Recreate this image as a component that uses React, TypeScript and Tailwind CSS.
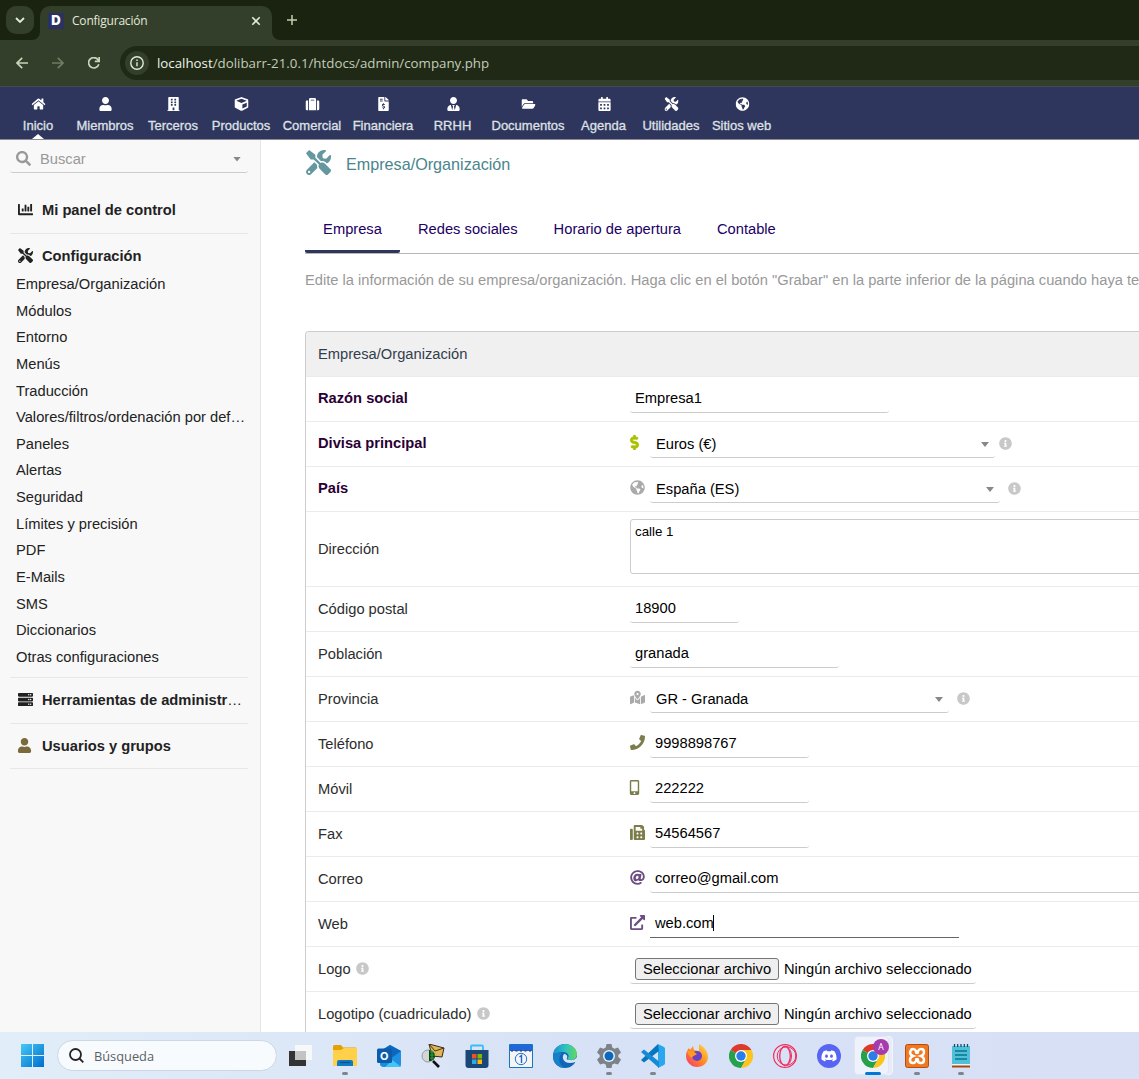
import React from "react";
import {
  FaHome, FaUser, FaBuilding, FaCube, FaSuitcase, FaFileInvoiceDollar, FaUserTie, FaFolderOpen,
  FaCalendarAlt, FaTools, FaGlobeAmericas, FaSearch, FaChartBar, FaServer, FaDollarSign,
  FaMapMarkedAlt, FaPhone, FaMobileAlt, FaFax, FaAt, FaExternalLinkAlt, FaInfoCircle,
} from "react-icons/fa";

const navItems = [
  { label: "Inicio", icon: FaHome, width: "w-[66px]", active: true },
  { label: "Miembros", icon: FaUser, width: "w-[68px]" },
  { label: "Terceros", icon: FaBuilding, width: "w-[68px]" },
  { label: "Productos", icon: FaCube, width: "w-[68px]" },
  { label: "Comercial", icon: FaSuitcase, width: "w-[74px]" },
  { label: "Financiera", icon: FaFileInvoiceDollar, width: "w-[68px]" },
  { label: "RRHH", icon: FaUserTie, width: "w-[71px]" },
  { label: "Documentos", icon: FaFolderOpen, width: "w-[80px]" },
  { label: "Agenda", icon: FaCalendarAlt, width: "w-[71px]" },
  { label: "Utilidades", icon: FaTools, width: "w-[64px]" },
  { label: "Sitios web", icon: FaGlobeAmericas, width: "w-[77px]" },
];

const sideLinks = [
  "Empresa/Organización", "Módulos", "Entorno", "Menús", "Traducción",
  "Valores/filtros/ordenación por defecto", "Paneles", "Alertas", "Seguridad",
  "Límites y precisión", "PDF", "E-Mails", "SMS", "Diccionarios", "Otras configuraciones",
];

function BrowserChrome() {
  return (
    <header className="font-['Open_Sans','Noto_Sans',sans-serif]">
      <div className="flex h-10 items-end bg-[#19230f]">
        <button className="mb-[6px] ml-[6px] flex size-7 items-center justify-center rounded-[10px] bg-[#343f2b]">
          <svg width="10" height="6" viewBox="0 0 10 6" fill="none" stroke="#e4eadb" strokeWidth="1.8"><path d="M1 1l4 4 4-4" /></svg>
        </button>
        <svg className="ml-[-2px]" width="8" height="8"><path d="M8 0v8H0a8 8 0 0 0 8-8z" fill="#343f2b" /></svg>
        <div className="flex h-[34px] w-[232px] items-center rounded-t-[10px] bg-[#343f2b] pb-[5px] pl-2 pr-[11px]">
          <span className="flex size-4 items-center justify-center bg-[#293260]">
            <b className="font-['Inter',sans-serif] text-[13px] leading-none font-black text-white">D</b>
          </span>
          <span className="ml-2 text-[12px] tracking-[-0.2px] text-[#e2e9d9]">Configuración</span>
          <svg className="ml-auto" width="10" height="10" viewBox="0 0 10 10" stroke="#e4eadb" strokeWidth="1.6"><path d="M1.3 1.3l7.4 7.4M8.7 1.3L1.3 8.7" /></svg>
        </div>
        <svg width="8" height="8"><path d="M0 0v8h8a8 8 0 0 1-8-8z" fill="#343f2b" /></svg>
        <svg className="mb-[15px] ml-[7px]" width="10" height="10" viewBox="0 0 10 10" stroke="#c2d0b2" strokeWidth="1.5"><path d="M0 5h10M5 0v10" /></svg>
      </div>
      <div className="flex h-[46px] items-center bg-[#343f2b]">
        <svg className="ml-4" width="12" height="12" viewBox="0 0 12 12" fill="none" stroke="#c7d5b8" strokeWidth="1.7"><path d="M12 6H1M6.2.8L1 6l5.2 5.2" /></svg>
        <svg className="ml-6" width="12" height="12" viewBox="0 0 12 12" fill="none" stroke="#6f7c62" strokeWidth="1.7"><path d="M0 6h11M5.8.8L11 6l-5.2 5.2" /></svg>
        <svg className="ml-6" width="12" height="12" viewBox="0 0 12 12" fill="none" stroke="#c7d5b8" strokeWidth="1.7"><path d="M10.8 7.2A5.2 5.2 0 1 1 10 2.7L11 4M11.2 0v4.4H6.8" /></svg>
        <div className="ml-5 flex h-[34px] flex-1 items-center rounded-l-full bg-[#1f2916] pl-[5px]">
          <span className="flex size-6 items-center justify-center rounded-full bg-[#343f2b]">
            <svg width="14" height="14" viewBox="0 0 14 14" fill="none" stroke="#e1e9d7" strokeWidth="1.4"><circle cx="7" cy="7" r="6.2" /><path d="M7 6.2v4M7 3.6v1.5" /></svg>
          </span>
          <span className="mt-[1px] ml-2 text-[13.3px] text-[#c3ccb9]"><span className="text-[#eef3e8]">localhost</span>/dolibarr-21.0.1/htdocs/admin/company.php</span>
        </div>
      </div>
    </header>
  );
}

function TopNav() {
  return (
    <nav className="flex h-[54px] border-t border-b border-t-[#424c4b] border-b-[#8b8b91] bg-[#2f365d] pl-[5px]">
      {navItems.map(({ label, icon: Icon, width, active }) => (
        <a key={label} className={`relative flex shrink-0 flex-col items-center pt-[10px] ${width}`}>
          <Icon className="translate-x-[0.5px] text-[14px] text-white" />
          <span className="mt-[5px] text-[13px] leading-5 whitespace-nowrap text-[#dfe0e6] [-webkit-text-stroke:0.3px_#dfe0e6]">{label}</span>
          {active && <span className="absolute bottom-0 h-[5px] w-3 bg-white [clip-path:polygon(50%_0,100%_100%,0_100%)]" />}
        </a>
      ))}
    </nav>
  );
}

function Caret() {
  return <span className="h-[5px] w-2 shrink-0 bg-[#888] [clip-path:polygon(0_0,100%_0,50%_100%)]" />;
}

function Section({ icon, label, className }: { icon: React.ReactNode; label: string; className: string }) {
  return (
    <div className={`flex items-center pl-2 ${className}`}>
      <span className="mb-[2px] w-6 shrink-0 text-[15px]">{icon}</span>
      <span className="truncate pr-[3px] font-normal"><b>{label}</b></span>
    </div>
  );
}

function Sidebar() {
  return (
    <aside className="w-[261px] shrink-0 border-r border-[#e6e6e6] bg-[#f8f8f8] pl-[10px] text-[14.7px] text-[#222]">
      <div className="flex h-[33px] w-[238px] items-center rounded-[3px] border-b border-[#ccc] px-[6px] text-[#999]">
        <FaSearch className="mt-[5px] text-[15px]" />
        <span className="mt-[6px] ml-[9px] flex-1">Buscar</span>
        <span className="mt-[6px] mr-px flex"><Caret /></span>
      </div>
      <div className="w-[238px]">
        <Section className="mt-[13px] h-12 border-b border-[#e7e7e7] pt-[1px]" icon={<FaChartBar />} label="Mi panel de control" />
        <Section className="h-[37px] pt-[7px]" icon={<FaTools />} label="Configuración" />
        <ul className="h-[407px] border-b border-[#e7e7e7] pl-[6px]">
          {sideLinks.map((l) => <li key={l} className="h-[26.63px] w-[232px] truncate leading-[27px]">{l}</li>)}
        </ul>
        <Section className="h-[46px] border-b border-[#e7e7e7]" icon={<FaServer />} label="Herramientas de administración" />
        <Section className="h-[45px] border-b border-[#e7e7e7]" icon={<FaUser className="-ml-px text-[#7a6a3c]" />} label="Usuarios y grupos" />
      </div>
    </aside>
  );
}

function Row({ label, bold, info, children, tall }: { label: string; bold?: boolean; info?: boolean; children: React.ReactNode; tall?: boolean }) {
  return (
    <div className={`flex shrink-0 items-center border-t border-[#ebebeb] pl-3 ${tall ? "h-[75px]" : "h-[45px]"}`}>
      <div className={`flex w-[312px] shrink-0 items-center ${bold ? "pb-[2px] font-bold text-[#2a0033]" : "text-[#2d2d2d]"}`}>
        {label}
        {info && <FaInfoCircle className="ml-[5px] text-[13px] text-[#c8c8c8]" />}
      </div>
      {children}
    </div>
  );
}

function Field({ value, width, focus }: { value: string; width: string; focus?: boolean }) {
  return (
    <div className={`-mt-[3px] flex h-[31px] shrink-0 items-center border-b pt-[2px] pl-[5px] text-black ${focus ? "border-[#666]" : "rounded-[3px] border-[#ccc]"} ${width}`}>
      {value}
      {focus && <span className="-ml-px h-4 w-px bg-black" />}
    </div>
  );
}

function Pick({ value, width, pad = "ml-1" }: { value: string; width: string; pad?: string }) {
  return (
    <>
      <div className={`-mt-1 flex h-[31px] shrink-0 items-center justify-between rounded-[3px] border-b border-[#ccc] pt-[6px] pr-[6px] pl-[6px] text-black ${width}`}>
        {value}
        <Caret />
      </div>
      <FaInfoCircle className={`mb-[2px] text-[13px] text-[#c8c8c8] ${pad}`} />
    </>
  );
}

function Lead({ children, color }: { children: React.ReactNode; color: string }) {
  return <span className={`mb-1 flex w-5 shrink-0 text-[15px] ${color}`}>{children}</span>;
}

function FileField() {
  return (
    <div className="-mt-px flex h-[30px] w-[346px] shrink-0 items-center rounded-[3px] border-b border-[#ccc] pt-[2px] pl-[5px] whitespace-nowrap text-black">
      <button className="h-[22px] w-[144px] shrink-0 rounded-[3px] border border-[#767676] bg-[#efefef] leading-[19px]">Seleccionar archivo</button>
      <span className="ml-[5px]">Ningún archivo seleccionado</span>
    </div>
  );
}

function Main() {
  return (
    <main className="flex min-w-0 flex-1 flex-col overflow-hidden bg-white pl-[44px] text-[14.7px]">
      <div className="flex h-[47px] shrink-0 items-center text-[#4b858d]">
        <FaTools className="mr-[15px] mb-[2px] ml-px text-[25px] text-[#65979f]" />
        <h1 className="mt-[2px] text-[16.17px]">Empresa/Organización</h1>
      </div>
      <div className="mt-[17px] flex h-[50px] shrink-0 border-b border-[#b8b8b8] text-[#200064]">
        <a className="flex w-[95px] justify-center rounded-[2px] border-b-[3px] border-[#2f365d] pt-[14px]">Empresa</a>
        <a className="ml-[18px] pt-[14px]">Redes sociales</a>
        <a className="ml-[36px] pt-[14px]">Horario de apertura</a>
        <a className="ml-[36px] pt-[14px]">Contable</a>
      </div>
      <p className="mt-[15px] h-[62px] shrink-0 whitespace-nowrap text-[#999]">
        Edite la información de su empresa/organización. Haga clic en el botón "Grabar" en la parte inferior de la página cuando haya terminado.
      </p>
      <div className="flex flex-1 flex-col overflow-hidden rounded-tl-[4px] border-t border-l border-[#ccc]">
        <div className="flex h-11 shrink-0 items-center bg-[#f0f0f0] pl-3 text-[#333d4d]">Empresa/Organización</div>
        <Row label="Razón social" bold><Field value="Empresa1" width="w-[259px]" /></Row>
        <Row label="Divisa principal" bold>
          <Lead color="text-[#a9c100]"><FaDollarSign className="-ml-[3px]" stroke="currentColor" strokeWidth="26" /></Lead>
          <Pick value="Euros (€)" width="w-[345px]" />
        </Row>
        <Row label="País" bold>
          <Lead color="text-[#aaa]"><FaGlobeAmericas /></Lead>
          <Pick value="España (ES)" width="w-[350px]" pad="ml-2" />
        </Row>
        <Row label="Dirección" tall>
          <div className="-mt-[6px] h-[55px] w-[640px] shrink-0 rounded-[3px] border border-[#ccc] px-[4px] pt-[3px] text-[13.33px] leading-[18px] text-black">calle 1</div>
        </Row>
        <Row label="Código postal"><Field value="18900" width="w-[109px]" /></Row>
        <Row label="Población"><Field value="granada" width="w-[209px]" /></Row>
        <Row label="Provincia">
          <Lead color="text-[#aaa]"><FaMapMarkedAlt /></Lead>
          <Pick value="GR - Granada" width="w-[299px]" pad="ml-2" />
        </Row>
        <Row label="Teléfono"><Lead color="text-[#7b7d4b]"><FaPhone /></Lead><Field value="9998898767" width="w-[159px]" /></Row>
        <Row label="Móvil"><Lead color="text-[#7b7d4b]"><FaMobileAlt className="-ml-[3px]" /></Lead><Field value="222222" width="w-[159px]" /></Row>
        <Row label="Fax"><Lead color="text-[#7b7d4b]"><FaFax /></Lead><Field value="54564567" width="w-[159px]" /></Row>
        <Row label="Correo"><Lead color="text-[#6c4e82]"><FaAt /></Lead><Field value="correo@gmail.com" width="w-[600px]" /></Row>
        <Row label="Web"><Lead color="text-[#6c4e82]"><FaExternalLinkAlt /></Lead><Field value="web.com" width="w-[309px]" focus /></Row>
        <Row label="Logo" info><FileField /></Row>
        <Row label="Logotipo (cuadriculado)" info><FileField /></Row>
      </div>
    </main>
  );
}

function Svg({ children, size = 24 }: { children: React.ReactNode; size?: number }) {
  return <svg width={size} height={size} viewBox="0 0 24 24">{children}</svg>;
}

function Chrome() {
  return (
    <Svg>
      <path d="M12 12L1.6 6A12 12 0 0 1 22.4 6z" fill="#dc3b2c" />
      <path d="M12 12L1.6 6A12 12 0 0 0 12 24l5.2-9z" fill="#25a04b" />
      <path d="M12 6h10.4A12 12 0 0 1 12 24l5.2-9z" fill="#fdc51b" />
      <circle cx="12" cy="12" r="6" fill="#fff" />
      <circle cx="12" cy="12" r="4.7" fill="#2b7de9" />
    </Svg>
  );
}

const discordPath = "M17.4 7.3a12 12 0 0 0-3-1l-.5 1a11 11 0 0 0-3.8 0l-.5-1a12 12 0 0 0-3 1C4.700 10 4.200 12.700 4.500 15.500a12 12 0 0 0 3.600 1.900l.8-1.300-1.200-.6.300-.3c2.600 1.200 5.400 1.200 8 0l.3.300-1.200.6.8 1.300a12 12 0 0 0 3.600-1.900c.3-3.200-.5-5.900-2.100-8.200zM9.500 13.800c-.8 0-1.400-.7-1.400-1.600s.6-1.600 1.400-1.600 1.400.7 1.400 1.600-.6 1.600-1.400 1.600zm5 0c-.8 0-1.400-.7-1.400-1.600s.6-1.600 1.400-1.600 1.400.7 1.400 1.600-.6 1.600-1.400 1.600z";

const apps: { name: string; running?: boolean; active?: boolean; art: React.ReactNode }[] = [
  { name: "tasks", art: <Svg><path d="M0 7h17v15H0z" fill="#333" /><path d="M6 1h17v15H6z" fill="#fafafa" fillOpacity=".9" /><path d="M6 7h11v9H6z" fill="#c3c3c3" /></Svg> },
  { name: "files", running: true, art: <Svg><path d="M0 2.500Q0 1 1.500 1H8l2 2.500h12.500Q24 3.500 24 5v17H0z" fill="#e6a000" /><path d="M0 6h8l3-2h13v18H0z" fill="#ffd04a" /><path d="M4 22v-4q0-2 2-2h12q2 0 2 2v4z" fill="#1379c5" /><path d="M7 18.500h10" stroke="#075392" strokeWidth="1.200" /></Svg> },
  { name: "outlook", art: <Svg><path d="M3 7L13 1l11 6v14q0 2-2 2H7q-4 0-4-3z" fill="#1590dd" /><path d="M7 5l6-4 11 6-14 10z" fill="#0f66bd" /><path d="M24 8v13q0 2-2 2H8z" fill="#41c5f5" /><path d="M24 8L14 15l9 7q1-.5 1-2z" fill="#238fe0" /><rect y="4.500" width="15" height="14.500" rx="1.500" fill="#0b5cad" /><text x="7.300" y="16" fontSize="11" fontWeight="700" textAnchor="middle" fill="#fff" fontFamily="Inter, sans-serif">O</text></Svg> },
  { name: "viewer", art: <Svg><path d="M8 0l15 4-2 9-10-1z" fill="#ddb65c" stroke="#3c2a10" strokeWidth="1" /><path d="M8 0l6 7 9-3" fill="none" stroke="#4f3510" /><circle cx="7" cy="12" r="6" fill="#d2d6d5" stroke="#949b9b" /><path d="M8 6q6 1 6 6t-6 5z" fill="#143d16" /><path d="M9 8h4M9 11h5M9 14h4M11 6v10" stroke="#29bd42" strokeWidth=".8" /><path d="M12 17l6 6" stroke="#111" strokeWidth="2.600" /></Svg> },
  { name: "store", art: <Svg><path d="M6 7V2.500Q6 1.500 7 1.500h10q1 0 1 1V7" fill="none" stroke="#39bdf3" strokeWidth="1.800" /><path d="M.5 6h23v15q0 3-3 3h-17q-3 0-3-3z" fill="#1a4775" /><path d="M7 10h4.500v4.500H7z" fill="#f25022" /><path d="M12.500 10H17v4.500h-4.500z" fill="#7fba00" /><path d="M7 15.500h4.500V20H7z" fill="#28aaf0" /><path d="M12.500 15.500H17V20h-4.500z" fill="#ffb900" /></Svg> },
  { name: "calendar", art: <Svg><path d="M.5.500h23v23H.5z" fill="#f5f5f5" stroke="#1675bd" /><path d="M1 1h22v6H1z" fill="#2366db" /><path d="M2 7h20" stroke="#334" strokeDasharray="2 2.500" /><circle cx="12" cy="15" r="5.700" fill="none" stroke="#2477d7" /><path d="M10.500 13l2-1.500V19" stroke="#2468c8" fill="none" strokeWidth="1.400" /></Svg> },
  { name: "edge", art: <Svg><defs><linearGradient id="edgeTop" x1="0" x2="1"><stop offset="0" stopColor="#168fd5" /><stop offset=".55" stopColor="#32c4bd" /><stop offset="1" stopColor="#64d85b" /></linearGradient></defs><circle cx="12" cy="12" r="12" fill="#1065b5" /><path d="M22 18l2-4v6z" fill="#d9e3f6" /><path d="M0 11C1 4 6 0 12 0c7 0 12 5 12 10 0 4-3 6-6 6-3 0-4-1-3-2 2-3-1-6-5-6-5 0-9 2-10 3z" fill="url(#edgeTop)" /><path d="M11 10c-3 4 0 9 6 9 3 0 5-1 7-2V13c-2 3-5 3.500-7 3-3 0-4-1-3-2 1-2-1-4-3-4z" fill="#d9e3f6" /><path d="M0 13c0-3 5-5 9-4-4 3-4 12 3 15C5 24 0 19 0 13z" fill="#1680c9" /></Svg> },
  { name: "settings", running: true, art: <Svg><path d="M9.500 0h5l.8 3.500 2.200 1.200L21 3.500l3 5-2.700 2.500v2L24 15.500l-3 5-3.500-1.100-2.200 1.200-.8 3.400h-5l-.8-3.400-2.200-1.200L3 20.500l-3-5L2.700 13v-2L0 8.500l3-5 3.500 1.200 2.200-1.200z" fill="#7b8288" /><circle cx="12" cy="12" r="6" fill="#e9eff4" /><circle cx="12" cy="12" r="4.500" fill="#0a68bd" /></Svg> },
  { name: "code", running: true, art: <Svg><path d="M17 0v24l6-3q1-.5 1-2V5q0-1.500-1-2z" fill="#29a7ee" /><path d="M17 0L0 16l3 2.500L18 7z" fill="#0876bd" /><path d="M0 8l3-2.500 15 12V24z" fill="#168bd5" /></Svg> },
  { name: "firefox", art: <Svg><defs><linearGradient id="fox" x1="1" y1="0" x2="0" y2="1"><stop offset="0" stopColor="#ffe34a" /><stop offset=".5" stopColor="#ff8a24" /><stop offset="1" stopColor="#f52e78" /></linearGradient></defs><path d="M14 0c5 3 9 7 9 13 0 6-5 10-11 10S1 18 1 12c0-3 1-6 3-8l1 2 3-4 1 4 5 1z" fill="url(#fox)" /><circle cx="12" cy="12" r="5" fill="#6942c4" /><path d="M2 7c5-1 7 1 10 3-2 2-4 1-5 4-3-2-4-4-5-7z" fill="#ff9b25" /></Svg> },
  { name: "chrome", art: <Chrome /> },
  { name: "opera", art: <Svg><g fill="none" stroke="#f02d5d"><circle cx="12" cy="12" r="11.400" strokeWidth="1.200" /><circle cx="13.500" cy="12" r="9.300" /><ellipse cx="12" cy="12" rx="5.300" ry="9.500" strokeWidth="1.300" /><path d="M14 2.500c6 4 6 15 0 19" /></g></Svg> },
  { name: "discord", art: <Svg><circle cx="12" cy="12" r="12" fill="#5865f2" /><path d={discordPath} fill="#fff" /></Svg> },
  { name: "browser", active: true, art: <Chrome /> },
  { name: "xampp", running: true, art: <Svg><rect x=".5" y=".5" width="23" height="23" rx="2" fill="#ef7821" stroke="#b34d10" /><path d="M6 6.500q0-1.500 2-1.500t3 2v1q0 1 1 1t1-1V7q1-2 3-2 3 0 3 3 0 3-3 4 3 1 3 4 0 3-3 3t-3-2v-1q0-1-1-1t-1 1v1q-1 2-3 2-3 0-3-3 0-3 3-4-3-1-3-4 0-.8 1-1.500z" fill="none" stroke="#fff" strokeWidth="2.500" /></Svg> },
  { name: "notes", running: true, art: <Svg><path d="M3 2h18v19H3z" fill="#50bfda" /><path d="M3 21h18v2.500H3z" fill="#a6490a" /><path d="M3 20h18v1.500H3z" fill="#f1f3f4" /><path d="M5.500 0v3M8.700 0v3M12 0v3M15.300 0v3M18.500 0v3" stroke="#174e67" strokeWidth="1.300" /><path d="M6 7h12M6 11h12M6 15h12" stroke="#08758c" strokeWidth="1.500" /></Svg> },
];

function Taskbar() {
  return (
    <footer className="flex h-[47px] shrink-0 items-center bg-linear-to-r from-[#e1edf8] via-[#d8e2f6] to-[#d7e0f4]">
      <svg className="ml-[21px]" width="23" height="23" viewBox="0 0 23 23">
        <defs><linearGradient id="win" x1="0" y1="0" x2="1" y2="1"><stop stopColor="#45c8f5" /><stop offset="1" stopColor="#006dcc" /></linearGradient></defs>
        <path d="M0 0h11v11H0zM12 0h11v11H12zM0 12h11v11H0zM12 12h11v11H12z" fill="url(#win)" />
      </svg>
      <div className="ml-[13px] flex h-[31px] w-[220px] items-center rounded-full border border-[#cbd7e5] bg-[#f8fbfe] pl-[11px]">
        <svg width="15" height="15" viewBox="0 0 15 15" fill="none" stroke="#242424" strokeWidth="1.800"><circle cx="6.500" cy="6.500" r="5.500" /><path d="M10.500 10.500l3.800 3.800" /></svg>
        <span className="mt-[2px] ml-[10px] font-['Open_Sans','Noto_Sans',sans-serif] text-[12.8px] text-[#5c5f62]">Búsqueda</span>
      </div>
      <div className="ml-[2px] flex">
        {apps.map((a) => (
          <div key={a.name} className="relative flex h-[47px] w-11 items-center justify-center">
            {a.active && <span className="absolute top-[4px] left-[4px] h-[39px] w-[38px] rounded-[4px] border border-[#f3f5fb] bg-[#e7ecf8]" />}
            {a.active && <span className="absolute top-[4px] left-[3px] h-[39px] w-[35px] rounded-[4px] border border-[#e0e6f2] bg-[#eef2fb]" />}
            <span className="relative">{a.art}</span>
            {a.active && <span className="absolute top-[7px] left-[22px] flex size-4 items-center justify-center rounded-full bg-[#a63bad] font-['Noto_Sans',sans-serif] text-[8.5px] text-white">A</span>}
            {a.active && <span className="absolute bottom-[4px] h-[3px] w-4 rounded-full bg-[#0078d4]" />}
            {a.running && <span className="absolute bottom-[4px] h-[3px] w-[6px] rounded-full bg-[#7e858e]" />}
          </div>
        ))}
      </div>
    </footer>
  );
}

export default function App() {
  return (
    <div className="flex h-[1079px] w-[1139px] flex-col overflow-hidden font-['Liberation_Sans',Arial,sans-serif]">
      <BrowserChrome />
      <TopNav />
      <div className="flex min-h-0 flex-1"><Sidebar /><Main /></div>
      <Taskbar />
    </div>
  );
}
